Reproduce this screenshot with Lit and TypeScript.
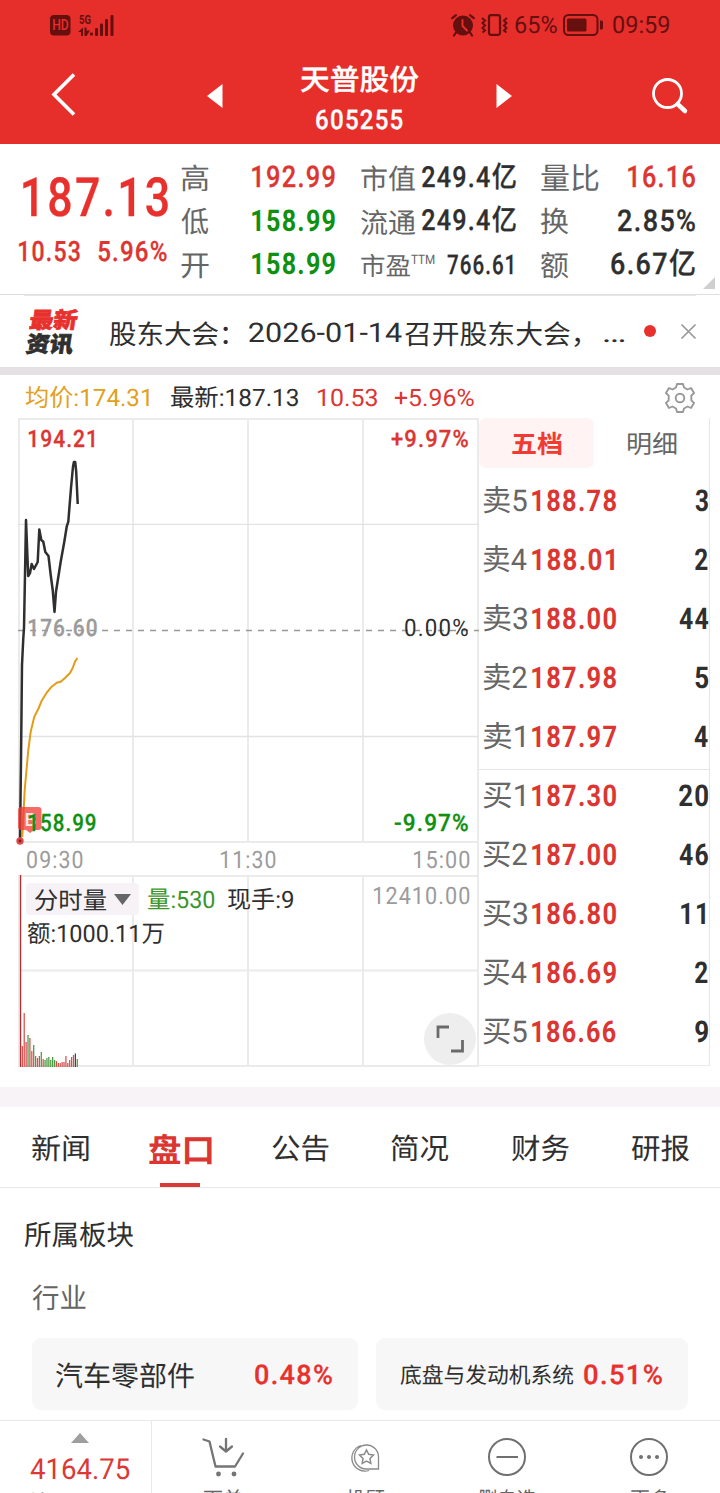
import { LitElement, html, css, svg } from "lit";
import { customElement, property } from "lit/decorators.js";

/** A single line of text whose ink is condensed or widened to an exact width. */
@customElement("fit-text")
class FitText extends LitElement {
  @property() text = "";
  @property({ type: Number }) w = 0;

  static styles = css`
    :host {
      display: block;
      flex: none;
      height: 1em;
      line-height: 1;
      white-space: pre;
      text-rendering: geometricPrecision;
    }
    span {
      display: inline-block;
      transform-origin: 0 0;
    }
  `;

  render() {
    return html`<span>${this.text}</span>`;
  }

  updated() {
    const cs = getComputedStyle(this);
    const span = this.renderRoot.querySelector("span")!;
    const ctx = document.createElement("canvas").getContext("2d")! as any;
    ctx.font = `${cs.fontWeight} ${cs.fontSize} ${cs.fontFamily}`;
    ctx.letterSpacing = cs.letterSpacing === "normal" ? "0px" : cs.letterSpacing;
    const m = ctx.measureText(this.text);
    const laidOut = parseFloat(getComputedStyle(span).width);
    const r = laidOut / m.width;
    const ink = (m.actualBoundingBoxLeft + m.actualBoundingBoxRight) * r;
    const k = this.w / ink;
    // Ideographs sit slightly above the centre of a Latin line box.
    const dy = /^[\u4e00-\u9fff：，]+$/.test(this.text) ? parseFloat(cs.fontSize) * 0.08 : 0;
    this.style.width = `${this.w}px`;
    span.style.transform = `translate(${m.actualBoundingBoxLeft * r * k}px, ${dy}px) scaleX(${k})`;
  }
}

const t = (text: string, w: number, cls = "") =>
  html`<fit-text class=${cls} .text=${text} .w=${w}></fit-text>`;

const PRICE =
  "20,841 21,760 22,665 23.2,640 24,628 26,520 28.2,576 30,573 31.7,564 34,569 37.7,562 39.3,529.5 41.3,540 43.3,541.7 45.3,552 48.5,556 50.7,575 52.7,590 54.5,612 56,591.7 60.7,561.7 64.3,541.7 66.7,526.7 68.3,521.7 71,488 73,466.7 73.9,462 75.2,462 76.2,471.7 77.7,504";
const AVERAGE =
  "22.3,837 24.7,790 28.3,750 30.7,731.7 34.3,716.7 38.3,709 41.7,700.7 46.7,692.7 51.7,686.7 56.7,682.7 60.7,681.7 65,678 70,673 72.7,668 75,661.7 77.3,658";

const VOLUMES: [number, string][] = [
  [21, "r"], [54, "r"], [25, "r"], [32, "g"], [29, "r"], [16, "r"], [22, "g"], [11, "r"], [9, "r"], [11, "r"],
  [15, "g"], [8, "r"], [7, "g"], [9, "g"], [10, "g"], [7, "g"], [10, "g"], [7, "g"], [6, "r"], [4, "r"],
  [4, "r"], [5, "r"], [5, "r"], [11, "r"], [4, "r"], [7, "r"], [10, "r"], [12, "r"], [13.5, "d"], [8, "g"],
];

const SELLS: [string, string, number, string, number][] = [
  ["卖5", "188.78", 84, "3", 13],
  ["卖4", "188.01", 82, "2", 13],
  ["卖3", "188.00", 84, "44", 29.5],
  ["卖2", "187.98", 84, "5", 13],
  ["卖1", "187.97", 84, "4", 14],
];
const BUYS: [string, string, number, string, number][] = [
  ["买1", "187.30", 84, "20", 29],
  ["买2", "187.00", 84, "46", 29.5],
  ["买3", "186.80", 84, "11", 24],
  ["买4", "186.69", 84, "2", 13],
  ["买5", "186.66", 84, "9", 13],
];

@customElement("app-root")
class AppRoot extends LitElement {
  static styles = css`
    :host {
      display: flex;
      flex-direction: column;
      width: 720px;
      height: 1493px;
      overflow: hidden;
      background: #fff;
      color: #2f2f2f;
      font-family: Roboto, "Noto Sans CJK SC", sans-serif;
      font-size: 28px;
    }
    svg { display: block; flex: none; overflow: visible; }
    .row { display: flex; align-items: center; }
    .spread { display: flex; align-items: center; justify-content: space-between; }
    .grow { flex: 1; }
    .w5 { font-weight: 500; -webkit-text-stroke: 0.3px currentColor; }
    .w7 { font-weight: 700; }
    .n { letter-spacing: 0.05em; }
    .s13 { font-size: 13px; }
    .s20 { font-size: 20px; }
    .s22 { font-size: 22px; }
    .s24 { font-size: 24px; }
    .s25 { font-size: 25px; }
    .s27 { font-size: 27px; }
    .s29 { font-size: 29px; }
    .s30 { font-size: 30px; }
    .s33 { font-size: 33px; }
    .s54 { font-size: 54px; }
    .red { color: #dc3632; }
    .hot { color: #e8302d; }
    .green { color: #109010; }
    .lime { color: #3a962a; }
    .gold { color: #e2a021; }
    .gray { color: #666; }
    .pale { color: #9b9b9b; }

    .head { background: #e62e2b; color: #fff; height: 144px; flex: none; }
    .status { height: 50px; padding: 0 51px 0 50px; color: #660f0f; box-sizing: border-box; }
    .status .net { margin-left: 8px; }
    .status .alarm { margin-right: 6px; }
    .status .vibe { margin-right: 7px; }
    .status .batt { margin: 0 10px 0 6px; }
    .nav { height: 92px; padding: 0 32px 0 52px; }
    .back { margin: 0 131px 4px 0; }
    .find { margin-left: 140px; }
    .title { display: flex; flex-direction: column; align-items: center; gap: 13px; width: 120px; margin: 0 77px; padding-top: 7px; }

    .quote { height: 150px; flex: none; display: flex; position: relative; border-bottom: 1px solid #dedede; }
    .last { width: 181px; padding: 28px 0 0 23px; box-sizing: border-box; }
    .last .row { gap: 18px; margin: 12px 0 0 -4px; }
    .col { padding-top: 12.5px; display: flex; flex-direction: column; }
    .col .spread { height: 43.5px; }
    .c2 { width: 153.5px; margin-right: 26.5px; }
    .c3 { width: 155px; margin-right: 25px; }
    .c4 { width: 154px; }
    .ttm { align-self: flex-start; margin: 10px 12px 0 1px; }
    .pe { margin-right: 3px; }
    .corner { position: absolute; right: 5px; bottom: 5px; }

    .news { height: 71px; flex: none; box-sizing: border-box; padding-left: 28px; }
    .rule { height: 1px; flex: none; margin: 0 24px; background: #e6e6e6; }
    .logo { width: 51px; margin-right: 30px; display: flex; flex-direction: column; gap: 2px; font-weight: 900; transform: skewX(-8deg); }
    .logo fit-text { -webkit-text-stroke: 0.7px currentColor; }
    .head-line { padding-top: 3px; }
    .day { margin: 0 3px 0 21px; }
    .more { margin-left: 23px; }
    .dot { width: 12px; height: 12px; border-radius: 50%; background: #e8302d; margin: 0 25px 1px 19px; }
    .close { margin-bottom: 1px; }
    .band { height: 8px; flex: none; background: #e4e0e4; }

    .legend { height: 43px; flex: none; padding: 2px 25px 0; box-sizing: border-box; }
    .market { display: flex; height: 669px; flex: none; }
    .chart { width: 480px; position: relative; flex: none; }
    .chart > svg { position: absolute; left: 0; top: 0; }
    .lab { position: absolute; }
    .max { left: 29px; top: 9px; }
    .maxp { right: 12px; top: 9px; }
    .mid { left: 29px; top: 198px; }
    .midp { right: 12px; top: 198px; }
    .min { left: 29px; top: 393px; }
    .minp { right: 12px; top: 393px; }
    .time { position: absolute; left: 27px; right: 10px; top: 430px; display: flex; justify-content: space-between; }
    .vol { position: absolute; left: 26px; right: 10px; top: 465px; display: flex; align-items: center; }
    .vol > fit-text { margin-top: 2px; }
    .pick { display: flex; align-items: center; gap: 8px; width: 113px; height: 32px; box-sizing: border-box; padding-left: 9px; background: #f6f2f6; border-radius: 4px; margin-right: 9px; }
    .vmax { margin-bottom: 6px; }
    .amount { left: 27px; top: 504px; }

    .book { width: 231px; height: 648px; border-right: 1px solid #e6e6e6; border-bottom: 1px solid #ebebeb; box-sizing: border-box; margin-left: -1px; }
    .switch { height: 50px; margin-bottom: 4px; }
    .on { width: 115px; height: 50px; border-radius: 7px; background: #fff3f3; display: flex; align-items: center; justify-content: center; color: #f13a31; }
    .off { width: 115px; display: flex; justify-content: center; }
    .on fit-text, .off fit-text { margin-top: 1px; }
    .lv { height: 59px; padding: 0 1px 0 4px; }
    .lv .px { margin-left: 5px; }
    .side { height: 297px; display: flex; flex-direction: column; }
    .side .lv { flex: none; box-sizing: border-box; }
    .side + .side { height: 292px; border-top: 1px solid #e6e6e6; justify-content: flex-end; }

    .gap { height: 20px; flex: none; background: #f7f3f7; }
    .tabs { height: 80px; flex: none; border-bottom: 1px solid #e8e8e8; display: grid; grid-template-columns: repeat(6, 120px); }
    .tab { display: flex; flex-direction: column; align-items: center; justify-content: center; position: relative; padding-top: 3px; }
    .tab.cur::after { content: ""; position: absolute; bottom: 0; width: 40px; height: 4px; background: #d93a37; }
    .sector { height: 232px; flex: none; box-sizing: border-box; padding: 32px 32px 0; }
    .h1 { margin-left: -8px; }
    .h2 { margin: 35px 0 27px 0; }
    .cards { display: flex; gap: 18px; }
    .card { height: 72px; background: #f7f7f7; border-radius: 9px; box-sizing: border-box; padding: 2px 26px 0 24px; }
    .a { width: 326px; }
    .b { width: 312px; }

    .bar { height: 73px; flex: none; border-top: 1px solid #e8e8e8; display: flex; }
    .index { width: 151px; border-right: 1px solid #e8e8e8; display: flex; flex-direction: column; align-items: center; padding-top: 12px; color: #db3936; }
    .index .up { margin-left: 8px; }
    .index .v { margin: 13px 0 5px 8px; }
    .index .m { align-self: flex-start; margin-left: 30px; color: #666; }
    .acts { flex: 1; display: grid; grid-template-columns: repeat(4, 142px); }
    .act { display: flex; flex-direction: column; align-items: center; padding-top: 16px; gap: 10px; color: #666; }
  `;

  level([name, px, pw, qty, qw]: [string, string, number, string, number]) {
    const one = name.endsWith("1");
    return html`<div class="row lv">
      ${t(name, one ? 41 : 44, "s30 gray")}
      ${one ? html`<svg width="3" height="1"></svg>` : ""}
      ${t(px, pw, "n s30 w7 red px")}
      <div class="grow"></div>
      ${t(qty, qw, "n s30 w7")}
      ${qty === "11" ? html`<svg width="3" height="1"></svg>` : ""}
    </div>`;
  }

  chart() {
    return svg`
      <g stroke="#ebebeb" stroke-width="2" fill="none">
        <path d="M19,418V843M133,418V843M248,418V843M363,418V843M478,418V1067M18,419H479M18,842H479"/>
        <path d="M19,875V1067M133,875V1067M248,875V1067M363,875V1067M18,876H479M18,970.5H479M18,1066H479"/>
        <path stroke-width="1.3" stroke="#e3e3e3" d="M18,524.3H479M18,736.5H479"/>
      </g>
      <path d="M18,630.5H479" stroke="#999" stroke-width="1.6" stroke-dasharray="6 6"/>
      <polyline points=${AVERAGE} fill="none" stroke="#e39c16" stroke-width="2" stroke-linejoin="round"/>
      <polyline points=${PRICE} fill="none" stroke="#2f2f2f" stroke-width="2.5" stroke-linejoin="round"/>
      <path d="M21,807H38.5Q41.5,807 41.5,810V827Q41.5,830 38.5,830H34L30,833L26,830H21Q18,830 18,827V810Q18,807 21,807Z" fill="#f03c38" fill-opacity=".76"/>
      <text x="24.500" y="825.500" font-size="19" font-weight="500" fill="#fff" fill-opacity=".85">B</text>
      <circle cx="20" cy="841" r="3.7" fill="#e04a48"/>
      <circle cx="20" cy="841" r="1.4" fill="#7b1f1f"/>
      <rect x="19.9" y="875" width="1.3" height="192" fill="#b32d31"/>
      ${VOLUMES.map(([h, c], i) => svg`<rect x=${21.7 + i * 1.895} y=${1067 - h} width="1.25" height=${h}
        fill=${c === "r" ? "#d5504f" : c === "g" ? "#4a9a40" : "#444"}/>`)}
    `;
  }

  render() {
    return html`
      <div class="head">
        <div class="row status">
          <svg width="21" height="21" viewBox="0 0 21 21">
            <rect y="0" width="20.5" height="20.5" rx="4" fill="#660f0f" />
            <text x="2.2" y="15.3" font-size="14" font-weight="500" fill="#e62e2b" textLength="16.5" lengthAdjust="spacingAndGlyphs">HD</text>
          </svg>
          <svg class="net" width="36" height="22" viewBox="0 0 36 22" fill="#660f0f">
            <text x="0" y="9.500" font-size="13.500" font-weight="700" textLength="12" lengthAdjust="spacingAndGlyphs">5G</text>
            <path d="M-1,18L4,13.5V22H2V18ZM5.5,13.5H7.5V16.5H11L7.5,22H5.5Z" />
            <rect x="11" y="18.5" width="3" height="3" rx="1" /><rect x="16" y="14" width="3" height="8" rx="1" />
            <rect x="21" y="9.5" width="3" height="12.5" rx="1" /><rect x="26" y="5" width="3" height="17" rx="1" />
            <rect x="31.5" y="1" width="3" height="21" rx="1" />
          </svg>
          <div class="grow"></div>
          <svg class="alarm" width="24" height="22" viewBox="0 0 24 22">
            <circle cx="12" cy="11.5" r="10" fill="#660f0f" />
            <path d="M1.2,4.2L5,1.2M22.8,4.2L19,1.2M5,18.5L3,21.5M19,18.5L21,21.5" stroke="#660f0f" stroke-width="2.2" stroke-linecap="round" />
            <path d="M11.5,6V12L16,16.5" fill="none" stroke="#e62e2b" stroke-width="1.9" stroke-linecap="round" />
          </svg>
          <svg class="vibe" width="27" height="22" viewBox="0 0 27 22" fill="none" stroke="#660f0f" stroke-width="2">
            <rect x="8" y="1.2" width="11" height="19.6" rx="2" stroke-width="2.2" />
            <path d="M1,4L4,6.5L1.5,9L4,11.5L1.5,14L4,16.5L1.5,18.5M26,4L23,6.5L25.5,9L23,11.5L25.5,14L23,16.5L25.5,18.5" />
          </svg>
          ${t("65%", 42, "s24")}
          <svg class="batt" width="40" height="22" viewBox="0 0 40 22" fill="#660f0f">
            <rect x="1" y="1" width="33.5" height="20" rx="4.5" fill="none" stroke="#660f0f" stroke-width="2" />
            <rect x="4" y="4.5" width="19.5" height="13" rx="1.5" />
            <path d="M37,6.5H38.5Q40,6.5 40,8V14Q40,15.500 38.500,15.500H37Z" />
          </svg>
          ${t("09:59", 56, "s24")}
        </div>
        <div class="row nav">
          <svg class="back" width="24" height="44" viewBox="0 0 24 44"><path d="M22,2.500L2,22.500L22,42.500" fill="none" stroke="#fff" stroke-width="3.600" /></svg>
          <svg width="16" height="24" viewBox="0 0 16 24"><path d="M15.500,0V24L0,12Z" fill="#fff" /></svg>
          <div class="title">${t("天普股份", 118, "s29 w5")} ${t("605255", 87, "n s27 w5")}</div>
          <svg width="16" height="24" viewBox="0 0 16 24"><path d="M0.500,0V24L16,12Z" fill="#fff" /></svg>
          <svg class="find" width="36" height="36" viewBox="0 0 36 36" fill="none" stroke="#fff">
            <circle cx="15.500" cy="15.500" r="14" stroke-width="2.800" />
            <path d="M25.500,26L33,33" stroke-width="4.500" stroke-linecap="round" />
          </svg>
        </div>
      </div>

      <div class="quote">
        <div class="last">
          ${t("187.13", 145, "n s54 w5 hot")}
          <div class="row">${t("10.53", 61, "n s28 w5 red")} ${t("5.96%", 69, "n s28 w5 red")}</div>
        </div>
        <div class="col c2">
          <div class="spread">${t("高", 28, "s29 gray")} ${t("192.99", 83, "n s30 w5 red")}</div>
          <div class="spread">${t("低", 28, "s29 gray")} ${t("158.99", 83, "n s30 w7 green")}</div>
          <div class="spread">${t("开", 28, "s29 gray")} ${t("158.99", 83, "n s30 w7 green")}</div>
        </div>
        <div class="col c3">
          <div class="spread">${t("市值", 54, "gray")} ${t("249.4亿", 94, "n s29 w5")}</div>
          <div class="spread">${t("流通", 55, "gray")} ${t("249.4亿", 94, "n s29 w5")}</div>
          <div class="spread">${t("市盈", 49, "s25 gray")} ${t("TTM", 24, "s13 gray ttm")} ${t("766.61", 66, "n s27 w5 pe")}</div>
        </div>
        <div class="col c4">
          <div class="spread">${t("量比", 58, "s30 gray")} ${t("16.16", 67, "n s30 w5 red")}</div>
          <div class="spread">${t("换", 28, "s29 gray")} ${t("2.85%", 77, "n s30 w5")}</div>
          <div class="spread">${t("额", 28, "s29 gray")} ${t("6.67亿", 84, "n s30 w5")}</div>
        </div>
        <svg class="corner" width="12" height="12"><path d="M12,0V12H0Z" fill="#cfcfcf" /></svg>
      </div>
      <div class="rule"></div>
      <div class="row news">
        <div class="logo">${t("最新", 48, "s22 hot")} ${t("资讯", 47, "s22")}</div>
        <div class="row head-line">
          ${t("股东大会：", 119, "s27")} ${t("2026-01-14", 153, "s27 day")}
          ${t("召开股东大会，", 175, "s27")} ${t("…", 22, "s27 more")}
        </div>
        <div class="dot"></div>
        <svg class="close" width="15" height="15"><path d="M0.500,0.500L14.500,14.500M14.500,0.500L0.500,14.500" stroke="#999" stroke-width="1.700" /></svg>
      </div>
      <div class="band"></div>

      <div class="row legend">
        ${t("均价:174.31", 124, "s24 gold")}
        <svg width="22" height="1"></svg>${t("最新:187.13", 127, "s24")}
        <svg width="20" height="1"></svg>${t("10.53", 59, "s24 red")}
        <svg width="17" height="1"></svg>${t("+5.96%", 80, "s24 red")}
        <div class="grow"></div>
        <svg width="30" height="30" viewBox="-15 -15 30 30" fill="none" stroke="#999" stroke-width="1.900" stroke-linejoin="round">
          <path d="M-3,-14H3L4,-10.500L7.500,-8.500L11,-10L14,-5L11.300,-2.300V2.300L14,5L11,10L7.500,8.500L4,10.500L3,14H-3L-4,10.500L-7.500,8.500L-11,10L-14,5L-11.300,2.300V-2.300L-14,-5L-11,-10L-7.500,-8.500L-4,-10.500Z" />
          <circle r="4.300" />
        </svg>
      </div>

      <div class="market">
        <div class="chart">
          <svg width="480" height="650" viewBox="0 418 480 650">${this.chart()}</svg>
          ${t("194.21", 65, "n lab max s24 w5 red")} ${t("+9.97%", 77, "n lab maxp s24 w5 red")}
          ${t("176.60", 68, "n lab mid s24 w5 pale")} ${t("0.00%", 63, "n lab midp s24")}
          ${t("158.99", 67, "n lab min s24 w5 green")} ${t("-9.97%", 74, "n lab minp s24 w5 green")}
          <div class="time">${t("09:30", 56, "n s24 pale")} ${t("11:30", 55, "n s24 pale")} ${t("15:00", 56, "n s24 pale")}</div>
          <div class="vol">
            <div class="pick">${t("分时量", 71, "s24")}<svg width="17" height="11"><path d="M0,0H17L8.500,11Z" fill="#666" /></svg></div>
            ${t("量:530", 67, "s24 lime")}<svg width="13" height="1"></svg>${t("现手:9", 65, "s24")}
            <div class="grow"></div>
            <div class="vmax">${t("12410.00", 96, "n s24 pale")}</div>
          </div>
          ${t("额:1000.11万", 137, "lab amount s24")}
          <svg class="lab full" width="480" height="650" viewBox="0 418 480 650" fill="none">
            <circle cx="450" cy="1039" r="26" fill="#eee" />
            <path d="M438,1038V1027H449M451,1051H462.500V1040" stroke="#6b6b6b" stroke-width="2.800" />
          </svg>
        </div>
        <div class="book">
          <div class="row switch">
            <div class="on">${t("五档", 50, "s25 w7")}</div>
            <div class="off">${t("明细", 50, "s25 gray")}</div>
          </div>
          <div class="side">${SELLS.map((r) => this.level(r))}</div>
          <div class="side">${BUYS.map((r) => this.level(r))}</div>
        </div>
      </div>

      <div class="gap"></div>
      <div class="tabs">
        <div class="tab">${t("新闻", 57, "s29")}</div>
        <div class="tab cur">${t("盘口", 63, "s33 w7 red")}</div>
        <div class="tab">${t("公告", 57, "s29")}</div>
        <div class="tab">${t("简况", 58, "s29")}</div>
        <div class="tab">${t("财务", 58, "s29")}</div>
        <div class="tab">${t("研报", 58, "s29")}</div>
      </div>
      <div class="sector">
        <div class="h1">${t("所属板块", 110)}</div>
        <div class="h2">${t("行业", 54, "gray")}</div>
        <div class="cards">
          <div class="spread card a">${t("汽车零部件", 138)} ${t("0.48%", 77, "n s27 w5 hot")}</div>
          <div class="spread card b">${t("底盘与发动机系统", 174, "s22")} ${t("0.51%", 78, "n s27 w5 hot")}</div>
        </div>
      </div>

      <div class="bar">
        <div class="index">
          <svg class="up" width="18" height="10"><path d="M9,0L18,10H0Z" fill="#9f9f9f" /></svg>
          <div class="v">${t("4164.75", 100, "s29")}</div>
          <div class="m">${t("沪", 19, "s20")}</div>
        </div>
        <div class="acts">
          <div class="act">
            <svg width="42" height="40" viewBox="0 0 42 40" fill="none" stroke="#757575" stroke-width="2.300" stroke-linejoin="round" stroke-linecap="round">
              <path d="M1.500,2.500L7.500,4.500L13.500,29.500H33L41,16.500M24,2V14M18,9.500L24,14.500L30,9.500" />
              <circle cx="16.500" cy="37" r="1.300" fill="#757575" /><circle cx="32" cy="37" r="1.300" fill="#757575" />
            </svg>
            ${t("下单", 38, "s20")}
          </div>
          <div class="act">
            <svg width="40" height="40" viewBox="0 0 40 40" fill="none" stroke="#8a8a8a" stroke-width="1.300">
              <path d="M24,33.500A13,13 0 0 1 16,8.500M33.500,32H21A12,12 0 1 1 33.500,20Z" />
              <path d="M21.500,13L23.700,17.300L28.500,18L25,21.500L25.800,26.300L21.500,24L17.200,26.300L18,21.500L14.500,18L19.300,17.300Z" stroke-width="1.500" />
            </svg>
            ${t("投顾", 39, "s20")}
          </div>
          <div class="act">
            <svg width="40" height="40" viewBox="0 0 40 40" fill="none" stroke="#707070" stroke-width="2"><circle cx="20" cy="20" r="18" /><path d="M9.500,20H31" /></svg>
            ${t("删自选", 58, "s20")}
          </div>
          <div class="act">
            <svg width="40" height="40" viewBox="0 0 40 40" fill="#707070"><circle cx="20" cy="20" r="18" fill="none" stroke="#707070" stroke-width="2" /><circle cx="12" cy="20" r="2" /><circle cx="20" cy="20" r="2" /><circle cx="28" cy="20" r="2" /></svg>
            ${t("更多", 39, "s20")}
          </div>
        </div>
      </div>
    `;
  }
}
